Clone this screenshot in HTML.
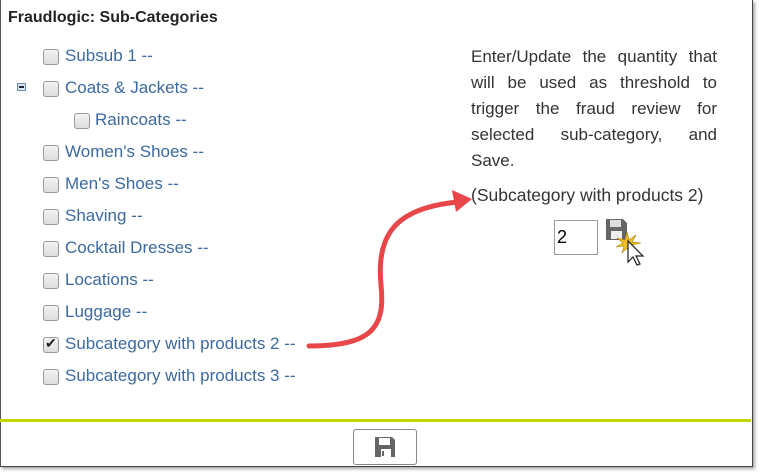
<!DOCTYPE html>
<html><head><style>
body{margin:0;width:760px;height:475px;background:#fff;font-family:"Liberation Sans",sans-serif;overflow:hidden;position:relative}
.frame{position:absolute;left:0;top:0;width:751px;height:466px;border:1px solid #444;border-top:none;border-left:1px solid #555;box-shadow:2px 2px 3px rgba(0,0,0,.35)}
.t{position:absolute;left:8px;top:9px;font-weight:bold;font-size:16px;color:#222}
.row{position:absolute;font-size:17px;color:#3b6aa0;height:20px;line-height:20px}
.cb{position:absolute;width:14px;height:14px;border:1px solid #999;border-radius:3px;background:linear-gradient(#f3f3f3,#ddd)}
.rt{position:absolute;left:471px;top:44px;width:246px;font-size:17px;line-height:26px;color:#333}
.rt div{text-align:justify;text-align-last:justify;white-space:nowrap}
.green{position:absolute;left:0;top:419px;width:751px;height:3px;background:#c6d600}
</style></head><body>
<div class="frame"></div>
<div class="t">Fraudlogic: Sub-Categories</div>
<div style="position:absolute;left:17px;top:83px;width:7px;height:6px;border:1px solid #6a8cb0;background:#dde6f0"><div style="position:absolute;left:1px;top:2px;width:5px;height:2px;background:#223"></div></div>
<div class="cb" style="left:43px;top:49px"></div><div class="row" style="left:65px;top:46px">Subsub 1 --</div>
<div class="cb" style="left:43px;top:81px"></div><div class="row" style="left:65px;top:78px">Coats &amp; Jackets --</div>
<div class="cb" style="left:74px;top:113px"></div><div class="row" style="left:95px;top:110px">Raincoats --</div>
<div class="cb" style="left:43px;top:145px"></div><div class="row" style="left:65px;top:142px">Women's Shoes --</div>
<div class="cb" style="left:43px;top:177px"></div><div class="row" style="left:65px;top:174px">Men's Shoes --</div>
<div class="cb" style="left:43px;top:209px"></div><div class="row" style="left:65px;top:206px">Shaving --</div>
<div class="cb" style="left:43px;top:241px"></div><div class="row" style="left:65px;top:238px">Cocktail Dresses --</div>
<div class="cb" style="left:43px;top:273px"></div><div class="row" style="left:65px;top:270px">Locations --</div>
<div class="cb" style="left:43px;top:305px"></div><div class="row" style="left:65px;top:302px">Luggage --</div>
<div class="cb" style="left:43px;top:337px"><span style="position:absolute;left:1px;top:-3px;font-size:14px;color:#222">✔</span></div><div class="row" style="left:65px;top:334px">Subcategory with products 2 --</div>
<div class="cb" style="left:43px;top:369px"></div><div class="row" style="left:65px;top:366px">Subcategory with products 3 --</div>
<div class="rt"><div>Enter/Update the quantity that</div><div>will be used as threshold to</div><div>trigger the fraud review for</div><div>selected sub-category, and</div><div style="text-align-last:left">Save.</div></div>
<div style="position:absolute;left:471px;top:185px;font-size:17.5px;color:#333;white-space:nowrap">(Subcategory with products 2)</div>
<div style="position:absolute;left:554px;top:220px;border:1px solid #999;font-size:18px;line-height:33px;padding-left:2px;box-sizing:border-box;width:44px;height:35px">2</div>
<svg style="position:absolute;left:605px;top:218px" width="45" height="52" viewBox="0 0 45 52">
<path d="M1 1h17l4 4v17H1z" fill="#666"/><rect x="5" y="2" width="11" height="7" fill="#ddd"/><rect x="6" y="13" width="11" height="8" fill="#eee"/>
<path d="M22 14l2 8 7-5-4 7 9 1-9 2 6 6-8-3 0 8-3-8-5 5 2-7-8 1 7-4-6-5 8 2z" fill="#f0c020" stroke="#b08000" stroke-width=".6"/>
<path d="M23 23v21l5-5 4 8 3-1-4-8h7z" fill="#fff" stroke="#222" stroke-width="1.2"/>
</svg>
<svg style="position:absolute;left:0;top:0" width="760" height="475">
<path d="M309 346 C 375 346, 385 325, 381 285 C 376 235, 395 208, 458 202" fill="none" stroke="#e8474a" stroke-width="5" stroke-linecap="round"/>
<path d="M472 199 L452 190 L456 212 Z" fill="#e8474a"/>
</svg>
<div class="green"></div>
<div style="position:absolute;left:353px;top:429px;width:62px;height:34px;border:1px solid #888;border-radius:3px"></div>
<svg style="position:absolute;left:374px;top:436px" width="22" height="22" viewBox="0 0 22 22"><path d="M1 1h17l3 3v17H1z" fill="#666"/><rect x="5" y="2" width="11" height="7" fill="#fff"/><rect x="7" y="13" width="10" height="8" fill="#fff"/><rect x="8" y="15" width="2" height="5" fill="#666"/></svg>
</body></html>
